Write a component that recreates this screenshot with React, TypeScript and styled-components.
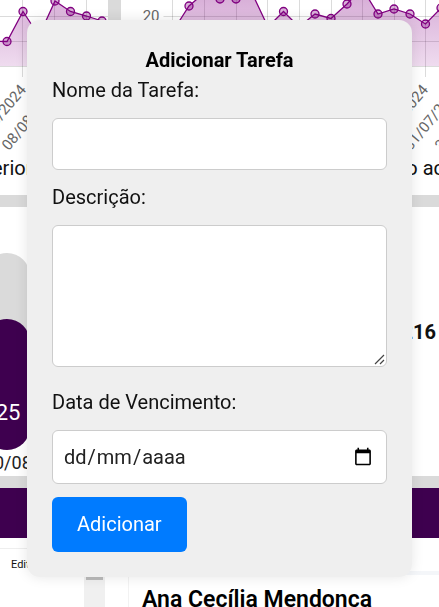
import React, { useState } from "react";
import styled, { createGlobalStyle } from "styled-components";

const GlobalStyle = createGlobalStyle`
  *, *::before, *::after { box-sizing: border-box; }
  body {
    margin: 0;
    background: #ffffff;
    color: #111111;
    font-family: Roboto, sans-serif;
    font-size: 20px;
    line-height: 30px;
  }
`;

const Page = styled.main`
  height: 100vh;
  overflow: hidden;
  display: flex;
  flex-direction: column;
`;

const Dashboard = styled.section`
  flex: none;
  display: flex;
  flex-direction: column;
  gap: 12px;
  padding-bottom: 12px;
  background: #dadada;
`;

const CardRow = styled.div`
  display: grid;
  grid-template-columns: 108px 1fr;
  gap: 13px;
`;

const ChartCard = styled.article`
  height: 195px;
  background: #ffffff;
  overflow: hidden;
  display: flex;
  flex-direction: column;
`;

const Chart = styled.svg`
  display: block;
  flex: none;
  width: 100%;
  height: 153px;
`;

const Caption = styled.p<{ $end?: boolean }>`
  margin: 0 -5px 0 -8px;
  white-space: pre;
  text-align: ${(p) => (p.$end ? "right" : "left")};
`;

const StatsCard = styled.article`
  height: 269px;
  padding-top: 46px;
  background: #ffffff;
  display: flex;
  justify-content: space-between;
  overflow: hidden;
`;

const BarColumn = styled.div`
  width: 46px;
  margin-left: -16px;
  display: flex;
  flex-direction: column;
`;

const BarTrack = styled.div`
  width: 46px;
  height: 199px;
  border-radius: 23px;
  background: #dadada;
  display: flex;
  align-items: flex-end;
`;

const BarFill = styled.div`
  width: 100%;
  height: 131px;
  border-radius: 23px;
  background: #3e004f;
  color: #ffffff;
  font-size: 22px;
  text-align: center;
  padding: 79px 0 0 2px;
`;

const BarDate = styled.span`
  padding-left: 10px;
  font-size: 18px;
  line-height: 26px;
  color: #222222;
`;

const Total = styled.strong`
  margin: 64px 3px 0 0;
  font-weight: 700;
`;

const Band = styled.div`
  flex: none;
  height: 50px;
  background: #3e004f;
`;

const Lower = styled.section`
  flex: 1;
  display: flex;
  min-height: 0;
  background: #ffffff;
`;

const ListPanel = styled.aside`
  width: 105px;
  flex: none;
  margin-top: 10px;
  border-top: 1px solid #eeeeee;
  display: flex;
  justify-content: space-between;
`;

const EditLabel = styled.span`
  margin: 8px 0 0 11px;
  font-size: 11px;
  line-height: 16px;
`;

const ScrollTrack = styled.div`
  width: 21px;
  padding: 0 2px;
  background: #f0f0f0;
`;

const ScrollThumb = styled.div`
  height: 31px;
  background: #bbbbbb;
`;

const PersonPanel = styled.article`
  flex: 1;
  margin: 33px 0 0 23px;
  border-top: 4px solid #f4f6f9;
  border-left: 1px solid #f2f2f2;
  padding: 10px 0 0 13px;
`;

const PersonName = styled.h2`
  margin: 0;
  font-size: 23px;
  line-height: 30px;
  font-weight: 600;
  color: #000000;
  white-space: nowrap;
`;

const Overlay = styled.div`
  position: fixed;
  inset: 0;
  padding: 20px 27px;
  display: flex;
  justify-content: center;
  align-items: flex-start;
`;

const Dialog = styled.form`
  width: 100%;
  padding: 25px;
  border-radius: 13px;
  background: #efefef;
  box-shadow: 0 0 13px rgba(0, 0, 0, 0.1);
  display: flex;
  flex-direction: column;
`;

const Title = styled.h1`
  margin: 0;
  font-size: 20px;
  line-height: 30px;
  font-weight: 700;
  text-align: center;
  color: #000000;
`;

const Field = styled.div<{ $space?: number }>`
  display: flex;
  flex-direction: column;
  gap: 13px;
  margin-bottom: ${(p) => p.$space ?? 12}px;
`;

const controlFrame = `
  display: block;
  width: 100%;
  margin: 0;
  padding: 12px 11px;
  border: 1px solid #cccccc;
  border-radius: 6px;
  background: #ffffff;
  color: #222222;
  font: 20px Roboto, sans-serif;
  outline: none;
`;

const TextInput = styled.input`
  ${controlFrame}
  height: 52px;
`;

const ControlWrap = styled.div`
  position: relative;
`;

const TextArea = styled.textarea`
  ${controlFrame}
  height: 142px;
  resize: vertical;
  &::-webkit-resizer { display: none; }
`;

const Grip = styled.svg`
  position: absolute;
  right: 2px;
  bottom: 2px;
  width: 11px;
  height: 11px;
  pointer-events: none;
`;

const DateInput = styled.input`
  ${controlFrame}
  height: 54px;
  &::-webkit-datetime-edit { opacity: 0; }
`;

const DateText = styled.div`
  position: absolute;
  top: 12px;
  left: 11px;
  color: #222222;
  pointer-events: none;
  display: flex;
`;

const DatePart = styled.span`
  padding: 0 1px;
`;

const Submit = styled.button`
  align-self: flex-start;
  height: 55px;
  padding: 0 25px 2px;
  border: 0;
  border-radius: 6px;
  background: #007bff;
  color: #ffffff;
  font: 20px Roboto, sans-serif;
  cursor: pointer;
`;

type Point = [number, number];

const leftPoints: Point[] = [
  [-9, 41], [7, 41.5], [23, 11.5], [39, 36], [55, 1], [70.5, 11.5], [86.5, 16], [102, 21], [118, 30],
];
const rightPoints: Point[] = [
  [52, 31], [68, 6], [83, -7], [99, -1], [115, -1], [131, -7], [147, 27], [162.5, 11.5], [178, 27],
  [194, 14], [210, 18.5], [226, 4], [241, -12], [257, 14], [273, 9], [289, 14], [304.5, 24], [320, 8],
];

interface PlotProps {
  id: string;
  points: Point[];
  ticks: number[];
  labels: { x: number; text: string }[];
  axis?: number;
}

function Plot({ id, points, ticks, labels, axis }: PlotProps) {
  const line = points.map((p) => p.join(",")).join(" ");
  const start = axis ?? 0;
  return (
    <Chart role="img" aria-label="Gráfico">
      <defs>
        <linearGradient id={id} gradientUnits="userSpaceOnUse" x1="0" y1="-20" x2="0" y2="66">
          <stop offset="0" stopColor="#800080" stopOpacity="0.36" />
          <stop offset="1" stopColor="#8b008b" stopOpacity="0.14" />
        </linearGradient>
      </defs>
      <g stroke="#000000" strokeOpacity="0.14">
        {[16.5, 41.5, 66.5].map((y) => (
          <line key={y} x1={axis ? start - 9 : 0} x2="100%" y1={y} y2={y} />
        ))}
        {ticks.map((x) => (
          <line key={x} x1={x} x2={x} y1="0" y2="77" />
        ))}
      </g>
      <polygon
        points={`${points[0][0]},66 ${line} ${points[points.length - 1][0]},66`}
        fill={`url(#${id})`}
      />
      <polyline points={line} fill="none" stroke="#800080" strokeWidth="1.3" />
      {points.map(([x, y]) => (
        <circle key={x} cx={x} cy={y} r="4" fill="#800080" fillOpacity="0.3" stroke="#800080" strokeWidth="1.3" />
      ))}
      <g fill="#666666" fontSize="15">
        {axis && (
          <text x={axis - 13} y="21" textAnchor="end">20</text>
        )}
        {labels.map(({ x, text }) => (
          <text key={x} textAnchor="end" transform={`translate(${x} 90) rotate(-50)`}>{text}</text>
        ))}
      </g>
    </Chart>
  );
}

export default function App() {
  const [date, setDate] = useState("");
  const [year, month, day] = date ? date.split("-") : ["aaaa", "mm", "dd"];

  return (
    <>
      <GlobalStyle />
      <Page>
        <Dashboard>
          <CardRow>
            <ChartCard>
              <Plot
                id="area-left"
                points={leftPoints}
                ticks={[22.5, 54.5, 86.5]}
                labels={[{ x: 27, text: "8/2024" }, { x: 60, text: "08/08/2024" }]}
              />
              <Caption>erior</Caption>
            </ChartCard>
            <ChartCard>
              <Plot
                id="area-right"
                points={rightPoints}
                axis={51.5}
                ticks={[51.5, 83.5, 115.5, 146.5, 178.5, 210.5, 241.5, 273.5, 304.5]}
                labels={[
                  { x: 308, text: "/2024" },
                  { x: 341, text: "31/07/2024" },
                  { x: 372, text: "31/07/2024" },
                ]}
              />
              <Caption $end>o ac</Caption>
            </ChartCard>
          </CardRow>
          <StatsCard>
            <BarColumn>
              <BarTrack>
                <BarFill>25</BarFill>
              </BarTrack>
              <BarDate>0/08</BarDate>
            </BarColumn>
            <Total>216</Total>
          </StatsCard>
        </Dashboard>
        <Band />
        <Lower>
          <ListPanel>
            <EditLabel>Edit</EditLabel>
            <ScrollTrack>
              <ScrollThumb />
            </ScrollTrack>
          </ListPanel>
          <PersonPanel>
            <PersonName>Ana Cecília Mendonça</PersonName>
          </PersonPanel>
        </Lower>
      </Page>

      <Overlay>
        <Dialog role="dialog" aria-labelledby="dialog-title" onSubmit={(e) => e.preventDefault()}>
          <Title id="dialog-title">Adicionar Tarefa</Title>
          <Field>
            <label htmlFor="name">Nome da Tarefa:</label>
            <TextInput id="name" type="text" />
          </Field>
          <Field $space={20}>
            <label htmlFor="description">Descrição:</label>
            <ControlWrap>
              <TextArea id="description" />
              <Grip viewBox="0 0 11 11" aria-hidden="true">
                <path d="M1 10L10 1M6 10L10 6" stroke="#444444" strokeWidth="1.2" />
              </Grip>
            </ControlWrap>
          </Field>
          <Field $space={13}>
            <label htmlFor="due">Data de Vencimento:</label>
            <ControlWrap>
              <DateInput id="due" type="date" value={date} onChange={(e) => setDate(e.target.value)} />
              <DateText aria-hidden="true">
                <DatePart>{day}</DatePart>/<DatePart>{month}</DatePart>/<DatePart>{year}</DatePart>
              </DateText>
            </ControlWrap>
          </Field>
          <Submit type="submit">Adicionar</Submit>
        </Dialog>
      </Overlay>
    </>
  );
}
